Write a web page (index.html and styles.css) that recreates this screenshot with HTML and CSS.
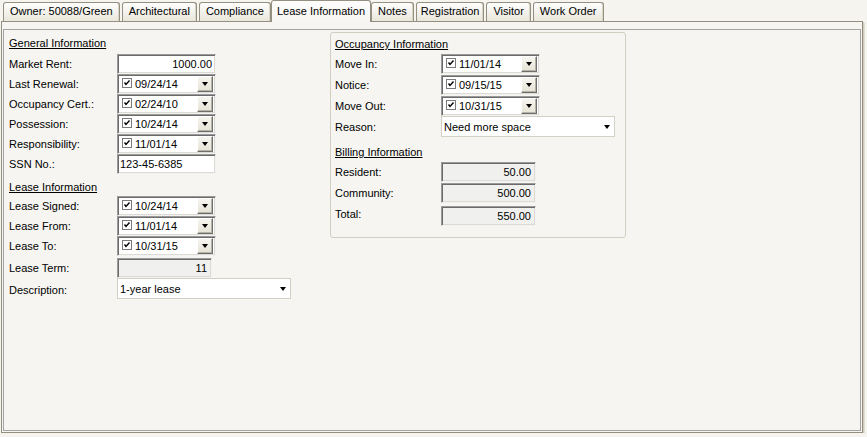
FILE: index.html
```html
<!DOCTYPE html>
<html>
<head>
<meta charset="utf-8">
<title>Lease Information</title>
<link rel="stylesheet" href="styles.css">
</head>
<body>
<div class="tabs">
  <div class="tab">Owner: 50088/Green</div>
  <div class="tab">Architectural</div>
  <div class="tab">Compliance</div>
  <div class="tab active">Lease Information</div>
  <div class="tab">Notes</div>
  <div class="tab tight">Registration</div>
  <div class="tab">Visitor</div>
  <div class="tab">Work Order</div>
</div>
<div class="page">
  <div class="inner">
    <div class="col-left">
      <div class="section-title">General Information</div>
      <div class="row"><span class="lbl">Market Rent:</span><div class="textbox num">1000.00</div></div>
      <div class="row"><span class="lbl">Last Renewal:</span><div class="dp"><span class="cb"><svg viewBox="0 0 8 8" width="8" height="8"><path d="M1.5 3.5 L3 5.5 L6.5 1.5" fill="none" stroke="#000" stroke-width="1.4"/></svg></span><span class="dtext">09/24/14</span><span class="btn"><span class="arrow"></span></span></div></div>
      <div class="row"><span class="lbl">Occupancy Cert.:</span><div class="dp"><span class="cb"><svg viewBox="0 0 8 8" width="8" height="8"><path d="M1.5 3.5 L3 5.5 L6.5 1.5" fill="none" stroke="#000" stroke-width="1.4"/></svg></span><span class="dtext">02/24/10</span><span class="btn"><span class="arrow"></span></span></div></div>
      <div class="row"><span class="lbl">Possession:</span><div class="dp"><span class="cb"><svg viewBox="0 0 8 8" width="8" height="8"><path d="M1.5 3.5 L3 5.5 L6.5 1.5" fill="none" stroke="#000" stroke-width="1.4"/></svg></span><span class="dtext">10/24/14</span><span class="btn"><span class="arrow"></span></span></div></div>
      <div class="row"><span class="lbl">Responsibility:</span><div class="dp"><span class="cb"><svg viewBox="0 0 8 8" width="8" height="8"><path d="M1.5 3.5 L3 5.5 L6.5 1.5" fill="none" stroke="#000" stroke-width="1.4"/></svg></span><span class="dtext">11/01/14</span><span class="btn"><span class="arrow"></span></span></div></div>
      <div class="row"><span class="lbl">SSN No.:</span><div class="textbox">123-45-6385</div></div>

      <div class="section-title second">Lease Information</div>
      <div class="row"><span class="lbl">Lease Signed:</span><div class="dp"><span class="cb"><svg viewBox="0 0 8 8" width="8" height="8"><path d="M1.5 3.5 L3 5.5 L6.5 1.5" fill="none" stroke="#000" stroke-width="1.4"/></svg></span><span class="dtext">10/24/14</span><span class="btn"><span class="arrow"></span></span></div></div>
      <div class="row"><span class="lbl">Lease From:</span><div class="dp"><span class="cb"><svg viewBox="0 0 8 8" width="8" height="8"><path d="M1.5 3.5 L3 5.5 L6.5 1.5" fill="none" stroke="#000" stroke-width="1.4"/></svg></span><span class="dtext">11/01/14</span><span class="btn"><span class="arrow"></span></span></div></div>
      <div class="row"><span class="lbl">Lease To:</span><div class="dp"><span class="cb"><svg viewBox="0 0 8 8" width="8" height="8"><path d="M1.5 3.5 L3 5.5 L6.5 1.5" fill="none" stroke="#000" stroke-width="1.4"/></svg></span><span class="dtext">10/31/15</span><span class="btn"><span class="arrow"></span></span></div></div>
      <div class="row gap2"><span class="lbl">Lease Term:</span><div class="ro">11</div></div>
      <div class="row combo-row"><span class="lbl lbl-low">Description:</span><div class="combo"><span>1-year lease</span><span class="arrow"></span></div></div>
    </div>

    <div class="group">
      <div class="section-title">Occupancy Information</div>
      <div class="row r-lbl"><span class="lbl">Move In:</span><div class="dp"><span class="cb"><svg viewBox="0 0 8 8" width="8" height="8"><path d="M1.5 3.5 L3 5.5 L6.5 1.5" fill="none" stroke="#000" stroke-width="1.4"/></svg></span><span class="dtext">11/01/14</span><span class="btn"><span class="arrow"></span></span></div></div>
      <div class="row r-lbl gap1"><span class="lbl">Notice:</span><div class="dp"><span class="cb"><svg viewBox="0 0 8 8" width="8" height="8"><path d="M1.5 3.5 L3 5.5 L6.5 1.5" fill="none" stroke="#000" stroke-width="1.4"/></svg></span><span class="dtext">09/15/15</span><span class="btn"><span class="arrow"></span></span></div></div>
      <div class="row r-lbl gap1"><span class="lbl">Move Out:</span><div class="dp"><span class="cb"><svg viewBox="0 0 8 8" width="8" height="8"><path d="M1.5 3.5 L3 5.5 L6.5 1.5" fill="none" stroke="#000" stroke-width="1.4"/></svg></span><span class="dtext">10/31/15</span><span class="btn"><span class="arrow"></span></span></div></div>
      <div class="row r-lbl combo-row"><span class="lbl">Reason:</span><div class="combo"><span>Need more space</span><span class="arrow"></span></div></div>

      <div class="section-title billing">Billing Information</div>
      <div class="row r-lbl"><span class="lbl">Resident:</span><div class="ro">50.00</div></div>
      <div class="row r-lbl gap1"><span class="lbl">Community:</span><div class="ro">500.00</div></div>
      <div class="row r-lbl gap3"><span class="lbl lbl-high">Total:</span><div class="ro">550.00</div></div>
    </div>
  </div>
</div>
</body>
</html>
```

FILE: styles.css
```css
* { box-sizing: border-box; }

html, body {
  margin: 0;
  padding: 0;
  background: #f5f4ef;
  font-family: "Liberation Sans", Arial, sans-serif;
  font-size: 11px;
  color: #000;
}

/* ---------- tabs ---------- */
.tabs {
  display: flex;
  align-items: flex-end;
  height: 21px;
  padding-left: 3px;
  gap: 2px;
  position: relative;
  z-index: 2;
}

.tab {
  height: 19px;
  min-width: 42px;
  line-height: 17px;
  padding: 0 6px;
  text-align: center;
  border: 1px solid #958f82;
  border-bottom: none;
  border-radius: 3px 3px 0 0;
  background: linear-gradient(#fefefd 0%, #f4f3ee 45%, #e9e6da 100%);
  box-shadow: inset -1px 0 0 #d8d4c6;
  white-space: nowrap;
}

.tab.tight { padding: 0 4px; }

.tab.active {
  height: 22px;
  line-height: 20px;
  margin: 0 -2px -1px -2px;
  padding: 0 5px;
  background: linear-gradient(#fdfdfc, #f6f5f1);
  box-shadow: none;
  position: relative;
  z-index: 3;
}

/* ---------- page ---------- */
.page {
  margin-left: 1px;
  width: 862px;
  height: 412px;
  border: 1px solid #958f82;
  background: #f6f5f1;
  padding: 7px 1px 1px 1px;
  box-shadow: 1px 1px 0 #cfcbbd, 2px 2px 0 #e2dfd3;
  position: relative;
  z-index: 1;
}

.inner {
  height: 100%;
  border: 1px solid #a3a3a3;
  display: flex;
  align-items: flex-start;
  padding: 2px 0 0 5px;
}

.col-left {
  width: 321px;
  padding-top: 4px;
}

.section-title {
  height: 14px;
  line-height: 14px;
  text-decoration: underline;
  margin-bottom: 4px;
}

.section-title.second {
  margin-top: 6px;
  margin-bottom: 2px;
}

.row {
  display: flex;
  align-items: center;
  height: 20px;
}

.row.gap1 { margin-top: 1px; }
.row.gap2 { margin-top: 2px; }
.row.gap3 { margin-top: 3px; }

.row.combo-row { height: 21px; }

.lbl {
  width: 108px;
  flex: none;
  white-space: nowrap;
}

.lbl-low { position: relative; top: 1px; }
.lbl-high { position: relative; top: -2px; }

.r-lbl .lbl { width: 106px; }

/* ---------- sunken text box ---------- */
.textbox, .ro, .dp {
  height: 20px;
  border: 1px solid;
  border-color: #9a9a9a #f2f2f2 #f2f2f2 #9a9a9a;
  box-shadow: inset 1px 1px 0 #6b6b6b, inset -1px -1px 0 #dcdad2;
  background: #fff;
}

.textbox {
  width: 99px;
  line-height: 18px;
  padding: 0 3px 0 2px;
}

.textbox.num { text-align: right; }

.ro {
  width: 95px;
  background: #f0f0ef;
  line-height: 18px;
  text-align: right;
  padding-right: 4px;
}

/* ---------- date picker ---------- */
.dp {
  width: 99px;
  display: flex;
  align-items: center;
  padding: 0 2px 0 4px;
}

.cb {
  width: 10px;
  height: 10px;
  border: 1px solid #7b7b7b;
  background: #fff;
  display: flex;
  align-items: center;
  justify-content: center;
  flex: none;
  margin-top: -2px;
}

.cb svg { display: block; }

.dtext {
  margin-left: 3px;
  line-height: 16px;
}

.btn {
  margin-left: auto;
  width: 16px;
  height: 16px;
  flex: none;
  background: linear-gradient(#f6f5f0, #e6e3d6);
  border: 1px solid;
  border-color: #fff #6e6e6e #6e6e6e #fff;
  box-shadow: inset -1px -1px 0 #b5b2a6;
  display: flex;
  align-items: center;
  justify-content: center;
}

.arrow {
  width: 0;
  height: 0;
  border-left: 3.5px solid transparent;
  border-right: 3.5px solid transparent;
  border-top: 4px solid #000;
}

/* ---------- combo ---------- */
.combo {
  width: 174px;
  height: 21px;
  border: 1px solid #d3d1c6;
  background: #fff;
  display: flex;
  align-items: center;
  justify-content: space-between;
  padding: 0 4px 0 2px;
}

/* ---------- group box ---------- */
.group {
  width: 296px;
  height: 206px;
  border: 1px solid #d0cfc1;
  border-radius: 3px;
  padding: 4px 0 0 4px;
}

.group .section-title { margin-bottom: 3px; }

.group .section-title.billing {
  margin-top: 8px;
  margin-bottom: 3px;
}
```
